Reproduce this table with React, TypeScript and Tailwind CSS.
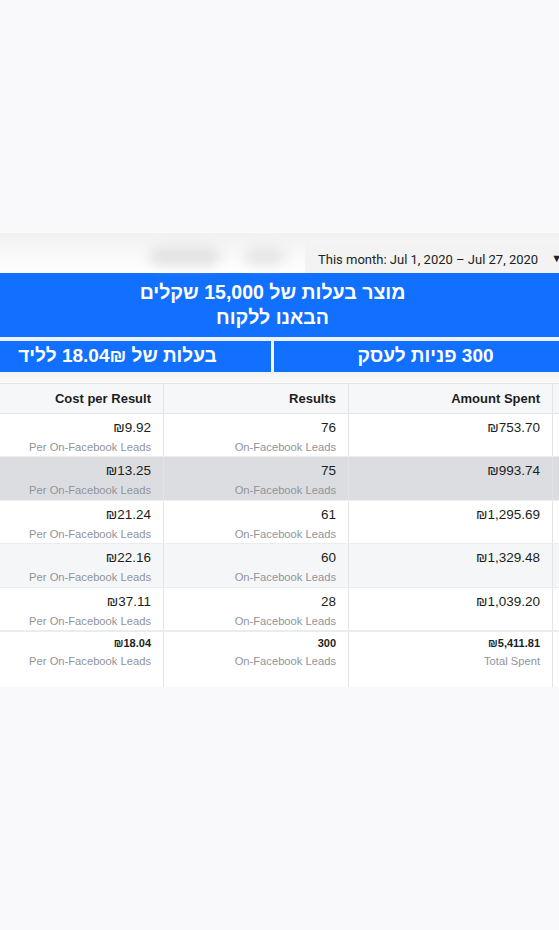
import React from "react";

const rows = [
  { cpr: "₪9.92", res: "76", amt: "₪753.70", bg: "bg-white" },
  { cpr: "₪13.25", res: "75", amt: "₪993.74", bg: "bg-[#dcdde0]" },
  { cpr: "₪21.24", res: "61", amt: "₪1,295.69", bg: "bg-white" },
  { cpr: "₪22.16", res: "60", amt: "₪1,329.48", bg: "bg-[#f5f6f7]" },
  { cpr: "₪37.11", res: "28", amt: "₪1,039.20", bg: "bg-white" },
];

const cols = "grid grid-cols-[164px_185px_204px_6px]";

export default function App() {
  return (
    <div className="w-[559px] h-[930px] bg-[#f9f9fb] overflow-hidden font-['Liberation_Sans',Arial,sans-serif]">
      <div className="h-[233px]" />
      {/* toolbar */}
      <div className="h-[40px] flex bg-gradient-to-b from-[#f1f1f1] to-white">
        <div className="w-[305px] shrink-0 flex items-center pl-[150px] gap-[25px] pt-[6px]">
          <div className="w-[70px] h-[18px] rounded-full bg-[#e2e2e2] blur-[6px]" />
          <div className="w-[40px] h-[18px] rounded-full bg-[#e6e6e6] blur-[6px]" />
        </div>
        <div className="flex-1 min-w-0 overflow-hidden whitespace-nowrap mt-[10px] bg-[#f3f3f3] flex items-center pl-[13px] pt-[3px] text-[13px] text-[#222] font-['Roboto',sans-serif]">
          <span className="shrink-0">This month: Jul 1, 2020 – Jul 27, 2020</span>
          <span className="shrink-0 ml-[13px] text-[11px]">▼</span>
        </div>
      </div>
      {/* banner */}
      <div className="h-[64px] bg-[#1170ff] flex flex-col items-center justify-center pr-[14px] text-white font-bold text-[19.5px] leading-[25px] pb-[1px]" dir="rtl">
        <div>מוצר בעלות של 15,000 שקלים</div>
        <div>הבאנו ללקוח</div>
      </div>
      <div className="h-[4px] bg-[#eef2f8]" />
      <div className="h-[31px] flex gap-[3px] bg-[#f4f7fb] text-white font-bold text-[19px]">
        <div className="w-[271px] bg-[#1170ff] flex items-center justify-center pr-[36px]" dir="rtl">
          בעלות של 18.04₪ לליד
        </div>
        <div className="flex-1 bg-[#1170ff] flex items-center justify-center pl-[18px]" dir="rtl">
          300 פניות לעסק
        </div>
      </div>
      <div className="h-[11px] bg-gradient-to-b from-[#f2f2f2] to-[#fafafa]" />
      {/* table */}
      <div className="bg-white">
        <div className={`${cols} h-[31px] bg-[#f6f7f9] border-t border-b border-[#e3e4e6] text-[13px] font-bold text-[#1c1e21]`}>
          <div className="flex items-center justify-end pr-[12px] border-r border-[#e3e4e6]">Cost per Result</div>
          <div className="flex items-center justify-end pr-[12px] border-r border-[#e3e4e6]">Results</div>
          <div className="flex items-center justify-end pr-[12px] border-r border-[#e3e4e6]">Amount Spent</div>
          <div />
        </div>
        {rows.map((r, i) => (
          <div key={i} className={`${cols} h-[43.4px] ${r.bg} border-b border-[#ebecee]`}>
            <div className="flex flex-col items-end pr-[12px] pt-[4px] border-r border-[#e3e4e6]">
              <div className="text-[13.5px] leading-[20px] text-[#1c1e21]">{r.cpr}</div>
              <div className="text-[11.2px] leading-[18px] text-[#90949c]">Per On-Facebook Leads</div>
            </div>
            <div className="flex flex-col items-end pr-[12px] pt-[4px] border-r border-[#e3e4e6]">
              <div className="text-[13.5px] leading-[20px] text-[#1c1e21]">{r.res}</div>
              <div className="text-[11.2px] leading-[18px] text-[#90949c]">On-Facebook Leads</div>
            </div>
            <div className="flex flex-col items-end pr-[12px] pt-[4px] border-r border-[#e3e4e6]">
              <div className="text-[13.5px] leading-[20px] text-[#1c1e21]">{r.amt}</div>
            </div>
            <div />
          </div>
        ))}
        <div className={`${cols} h-[56px] bg-white border-t border-[#ebecee]`}>
          <div className="flex flex-col items-end pr-[12px] pt-[2px] border-r border-[#e3e4e6]">
            <div className="text-[11px] leading-[18px] font-bold text-[#1c1e21]">₪18.04</div>
            <div className="text-[11.2px] leading-[18px] text-[#90949c]">Per On-Facebook Leads</div>
          </div>
          <div className="flex flex-col items-end pr-[12px] pt-[2px] border-r border-[#e3e4e6]">
            <div className="text-[11px] leading-[18px] font-bold text-[#1c1e21]">300</div>
            <div className="text-[11.2px] leading-[18px] text-[#90949c]">On-Facebook Leads</div>
          </div>
          <div className="flex flex-col items-end pr-[12px] pt-[2px] border-r border-[#e3e4e6]">
            <div className="text-[11px] leading-[18px] font-bold text-[#1c1e21]">₪5,411.81</div>
            <div className="text-[11.2px] leading-[18px] text-[#90949c]">Total Spent</div>
          </div>
          <div />
        </div>
      </div>
    </div>
  );
}
